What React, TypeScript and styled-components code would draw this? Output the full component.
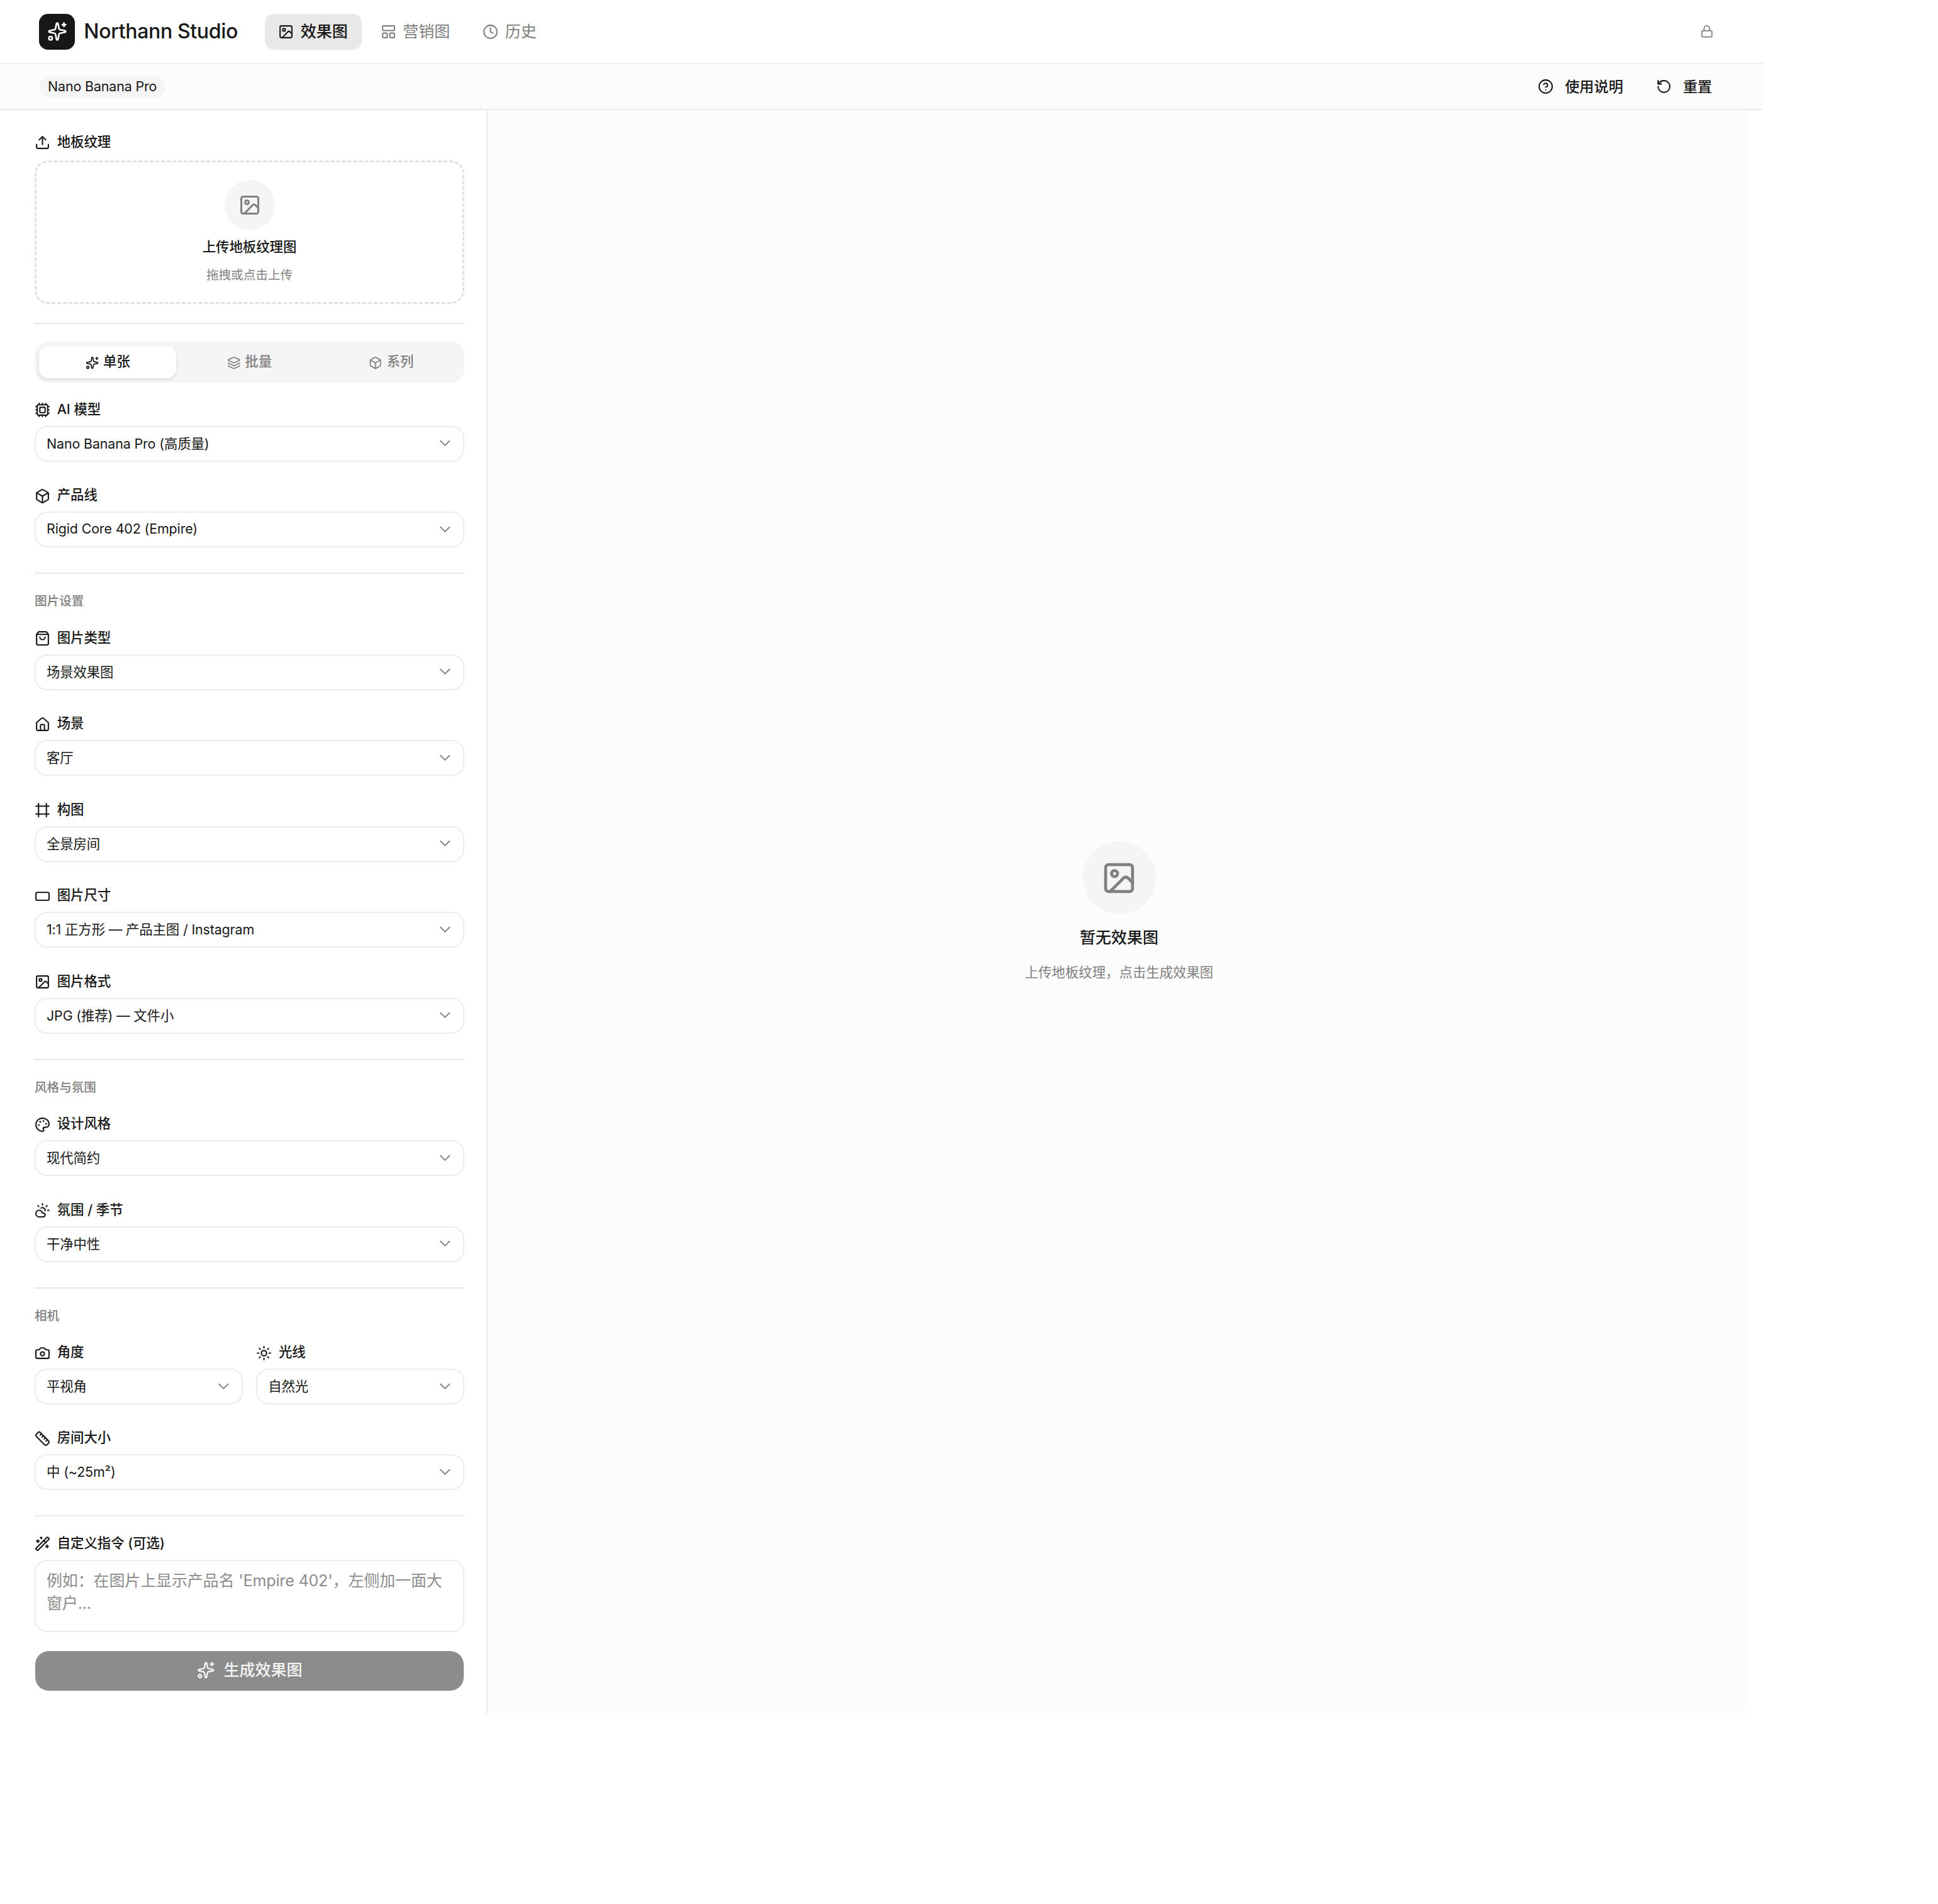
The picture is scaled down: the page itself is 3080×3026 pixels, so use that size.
import React, { FC, ReactNode } from 'react';
import styled, { createGlobalStyle } from 'styled-components';
import {
  Box,
  Camera,
  ChevronDown,
  CircleHelp,
  Clock,
  CloudSun,
  Cpu,
  Frame,
  House,
  Image as ImageIcon,
  Layers,
  LayoutPanelTop,
  Lock,
  LucideIcon,
  Palette,
  RectangleHorizontal,
  RotateCcw,
  Ruler,
  ShoppingBag,
  Sparkles,
  Sun,
  Upload,
  WandSparkles,
} from 'lucide-react';

const FONT = '"Inter", "Noto Sans CJK SC", sans-serif';

const GlobalStyle = createGlobalStyle`
  html, body {
    margin: 0;
    padding: 0;
    background: #fff;
  }
  * {
    box-sizing: border-box;
  }
  body {
    font-family: ${FONT};
    color: #171717;
  }
`;

const Page = styled.div`
  width: 2801px;
  display: flex;
  flex-direction: column;
`;

const Header = styled.header`
  height: 102px;
  display: flex;
  align-items: center;
  padding: 0 78px 0 62px;
  border-bottom: 2px solid #ececec;
`;

const Brand = styled.div`
  display: flex;
  align-items: center;
  gap: 14.3px;
  margin-right: 42.9px;
`;

const LogoMark = styled.div`
  width: 57px;
  height: 57px;
  border-radius: 14.3px;
  background: #171717;
  color: #fff;
  display: flex;
  align-items: center;
  justify-content: center;
`;

const BrandName = styled.span`
  font-size: 32px;
  font-weight: 500;
  letter-spacing: -0.35px;
  white-space: nowrap;
  padding-bottom: 1px;
`;

const Nav = styled.nav`
  display: flex;
  align-items: center;
  gap: 8px;
  flex: 1;
`;

const NavItem = styled.div<{ $active?: boolean }>`
  height: 57px;
  display: flex;
  align-items: center;
  gap: 10.7px;
  padding: 0 22.4px 4px 21.4px;
  border-radius: 14.3px;
  font-size: 25px;
  font-weight: ${({ $active }) => ($active ? 500 : 400)};
  color: ${({ $active }) => ($active ? '#171717' : '#808080')};
  background: ${({ $active }) => ($active ? '#e8e8e8' : 'transparent')};

  svg {
    margin-top: 4px;
  }
`;

const LockButton = styled.div`
  display: flex;
  color: #808080;
`;

const Toolbar = styled.div`
  height: 73px;
  display: flex;
  align-items: center;
  justify-content: space-between;
  padding: 0 80px 0 62px;
  background: #fcfcfc;
  border-bottom: 2px solid #ececec;
`;

const ModelChip = styled.span`
  height: 36px;
  display: flex;
  align-items: center;
  padding: 0 14px 2px;
  border-radius: 18px;
  background: #f5f5f5;
  font-size: 21.4px;
  letter-spacing: -0.12px;
  white-space: nowrap;
`;

const ToolbarActions = styled.div`
  display: flex;
  align-items: center;
  gap: 52px;
`;

const ToolbarButton = styled.div`
  display: flex;
  align-items: center;
  gap: 18px;
  padding-bottom: 3px;
  font-size: 23.2px;
  font-weight: 500;

  svg {
    margin-top: 3px;
  }
`;

const Body = styled.div`
  width: 2782px;
  display: flex;
  align-items: stretch;
`;

const Sidebar = styled.aside`
  width: 775px;
  flex-shrink: 0;
  padding: 37px 35px 37px 55px;
  border-right: 2px solid #ececec;
  display: flex;
  flex-direction: column;
`;

const FieldLabel = styled.div`
  height: 25px;
  display: flex;
  align-items: center;
  gap: 10.7px;
  padding-bottom: 3px;
  font-size: 21.4px;
  font-weight: 500;
  white-space: nowrap;

  svg {
    margin-top: 7px;
  }
`;

const UploadZone = styled.div`
  height: 228px;
  margin-top: 18px;
  border: 3px dashed #e0e0e0;
  border-radius: 21.4px;
  display: flex;
  flex-direction: column;
  align-items: center;
  padding-top: 28px;
`;

const IconCircle = styled.div<{ $size: number }>`
  width: ${({ $size }) => $size}px;
  height: ${({ $size }) => $size}px;
  border-radius: 50%;
  background: #f5f5f5;
  color: #808080;
  display: flex;
  align-items: center;
  justify-content: center;
  flex-shrink: 0;
`;

const UploadTitle = styled.div`
  margin-top: 11px;
  font-size: 21.4px;
  line-height: 30px;
  font-weight: 500;
`;

const UploadHint = styled.div`
  margin-top: 15px;
  font-size: 19.6px;
  line-height: 30px;
  color: #808080;
`;

const Divider = styled.div<{ $top?: number }>`
  height: 2px;
  margin-top: ${({ $top }) => $top ?? 40}px;
  background: #e8e8e8;
  flex-shrink: 0;
`;

const Tabs = styled.div`
  height: 65px;
  margin-top: 28px;
  margin-bottom: 29px;
  padding: 7px;
  border-radius: 21.4px;
  background: #f5f5f5;
  display: grid;
  grid-template-columns: repeat(3, 1fr);
  gap: 7px;
`;

const Tab = styled.div<{ $active?: boolean }>`
  height: 51px;
  display: flex;
  align-items: center;
  justify-content: center;
  gap: 7.1px;
  padding-bottom: 7px;
  border-radius: 14.3px;
  font-size: 21.4px;
  font-weight: 500;
  color: ${({ $active }) => ($active ? '#171717' : '#808080')};
  background: ${({ $active }) => ($active ? '#fff' : 'transparent')};
  box-shadow: ${({ $active }) => ($active ? '0 2px 5px rgba(0, 0, 0, 0.12)' : 'none')};

  svg {
    margin-top: 9px;
  }
`;

const SectionTitle = styled.div`
  margin-top: 28px;
  margin-bottom: 30px;
  font-size: 19.6px;
  line-height: 30px;
  font-weight: 500;
  color: #808080;
`;

const Field = styled.div`
  display: flex;
  flex-direction: column;
  gap: 14.5px;
  min-width: 0;

  & + & {
    margin-top: 40px;
  }
`;

const PromptField = styled(Field)`
  margin-top: 29px;
`;

const FieldPair = styled.div`
  display: grid;
  grid-template-columns: 1fr 1fr;
  gap: 21.4px;
  margin-bottom: 39.5px;

  & ${Field} + ${Field} {
    margin-top: 0;
  }
`;

const SelectBox = styled.div`
  height: 57px;
  display: flex;
  align-items: center;
  justify-content: space-between;
  padding: 0 14px 4px 17px;
  border: 2px solid #ececec;
  border-radius: 20px;
  background: #fff;
  font-size: 21.4px;
  letter-spacing: -0.12px;
  white-space: nowrap;
`;

const Chevron = styled(ChevronDown)`
  color: #808080;
  flex-shrink: 0;
  margin-top: 3px;
`;

const Prompt = styled.textarea`
  display: block;
  width: 100%;
  height: 115px;
  padding: 13px 17px;
  border: 2px solid #ececec;
  border-radius: 20px;
  background: #fff;
  resize: none;
  outline: none;
  font-family: ${FONT};
  font-size: 25px;
  line-height: 36px;
  letter-spacing: -0.14px;

  &::placeholder {
    color: #8c8c8c;
    opacity: 1;
  }
`;

const GenerateButton = styled.button`
  height: 63px;
  margin: 30px 1px 0;
  padding: 0 0 6px;
  border: none;
  border-radius: 21.4px;
  background: #8c8c8c;
  color: #f5f5f5;
  display: flex;
  align-items: center;
  justify-content: center;
  gap: 14.3px;
  font-family: ${FONT};
  font-size: 25px;
  font-weight: 500;

  svg {
    margin-top: 5px;
  }
`;

const Main = styled.main`
  flex: 1;
  background: #fcfcfc;
  display: flex;
  flex-direction: column;
  align-items: center;
  justify-content: center;
`;

const EmptyTitle = styled.div`
  margin-top: 19px;
  font-size: 25px;
  line-height: 36px;
  font-weight: 500;
`;

const EmptyHint = styled.div`
  margin-top: 21px;
  font-size: 21.4px;
  line-height: 32px;
  color: #808080;
`;

interface SelectFieldProps {
  icon: LucideIcon;
  label: string;
  value: string;
}

const SelectField: FC<SelectFieldProps> = ({ icon: Icon, label, value }) => (
  <Field>
    <FieldLabel>
      <Icon size={25} />
      {label}
    </FieldLabel>
    <SelectBox>
      {value}
      <Chevron size={28.6} strokeWidth={1.6} />
    </SelectBox>
  </Field>
);

const Section: FC<{ title: string; children: ReactNode }> = ({ title, children }) => (
  <>
    <Divider />
    <SectionTitle>{title}</SectionTitle>
    {children}
  </>
);

const App: FC = () => (
  <Page>
    <GlobalStyle />
    <Header>
      <Brand>
        <LogoMark>
          <Sparkles size={32} />
        </LogoMark>
        <BrandName>Northann Studio</BrandName>
      </Brand>
      <Nav>
        <NavItem $active>
          <ImageIcon size={25} />
          效果图
        </NavItem>
        <NavItem>
          <LayoutPanelTop size={25} />
          营销图
        </NavItem>
        <NavItem>
          <Clock size={25} />
          历史
        </NavItem>
      </Nav>
      <LockButton>
        <Lock size={21.4} />
      </LockButton>
    </Header>
    <Toolbar>
      <ModelChip>Nano Banana Pro</ModelChip>
      <ToolbarActions>
        <ToolbarButton>
          <CircleHelp size={25} />
          使用说明
        </ToolbarButton>
        <ToolbarButton>
          <RotateCcw size={25} />
          重置
        </ToolbarButton>
      </ToolbarActions>
    </Toolbar>
    <Body>
      <Sidebar>
        <FieldLabel>
          <Upload size={25} />
          地板纹理
        </FieldLabel>
        <UploadZone>
          <IconCircle $size={80}>
            <ImageIcon size={36} />
          </IconCircle>
          <UploadTitle>上传地板纹理图</UploadTitle>
          <UploadHint>拖拽或点击上传</UploadHint>
        </UploadZone>
        <Divider $top={30} />
        <Tabs>
          <Tab $active>
            <Sparkles size={21.4} />
            单张
          </Tab>
          <Tab>
            <Layers size={21.4} />
            批量
          </Tab>
          <Tab>
            <Box size={21.4} />
            系列
          </Tab>
        </Tabs>
        <SelectField icon={Cpu} label="AI 模型" value="Nano Banana Pro (高质量)" />
        <SelectField icon={Box} label="产品线" value="Rigid Core 402 (Empire)" />
        <Section title="图片设置">
          <SelectField icon={ShoppingBag} label="图片类型" value="场景效果图" />
          <SelectField icon={House} label="场景" value="客厅" />
          <SelectField icon={Frame} label="构图" value="全景房间" />
          <SelectField icon={RectangleHorizontal} label="图片尺寸" value="1:1 正方形 — 产品主图 / Instagram" />
          <SelectField icon={ImageIcon} label="图片格式" value="JPG (推荐) — 文件小" />
        </Section>
        <Section title="风格与氛围">
          <SelectField icon={Palette} label="设计风格" value="现代简约" />
          <SelectField icon={CloudSun} label="氛围 / 季节" value="干净中性" />
        </Section>
        <Section title="相机">
          <FieldPair>
            <SelectField icon={Camera} label="角度" value="平视角" />
            <SelectField icon={Sun} label="光线" value="自然光" />
          </FieldPair>
          <SelectField icon={Ruler} label="房间大小" value="中 (~25m²)" />
        </Section>
        <Divider $top={40} />
        <PromptField>
          <FieldLabel>
            <WandSparkles size={25} />
            自定义指令 (可选)
          </FieldLabel>
          <Prompt placeholder="例如：在图片上显示产品名 'Empire 402'，左侧加一面大窗户..." />
        </PromptField>
        <GenerateButton>
          <Sparkles size={28.6} />
          生成效果图
        </GenerateButton>
      </Sidebar>
      <Main>
        <IconCircle $size={116}>
          <ImageIcon size={57} />
        </IconCircle>
        <EmptyTitle>暂无效果图</EmptyTitle>
        <EmptyHint>上传地板纹理，点击生成效果图</EmptyHint>
      </Main>
    </Body>
  </Page>
);

export default App;
